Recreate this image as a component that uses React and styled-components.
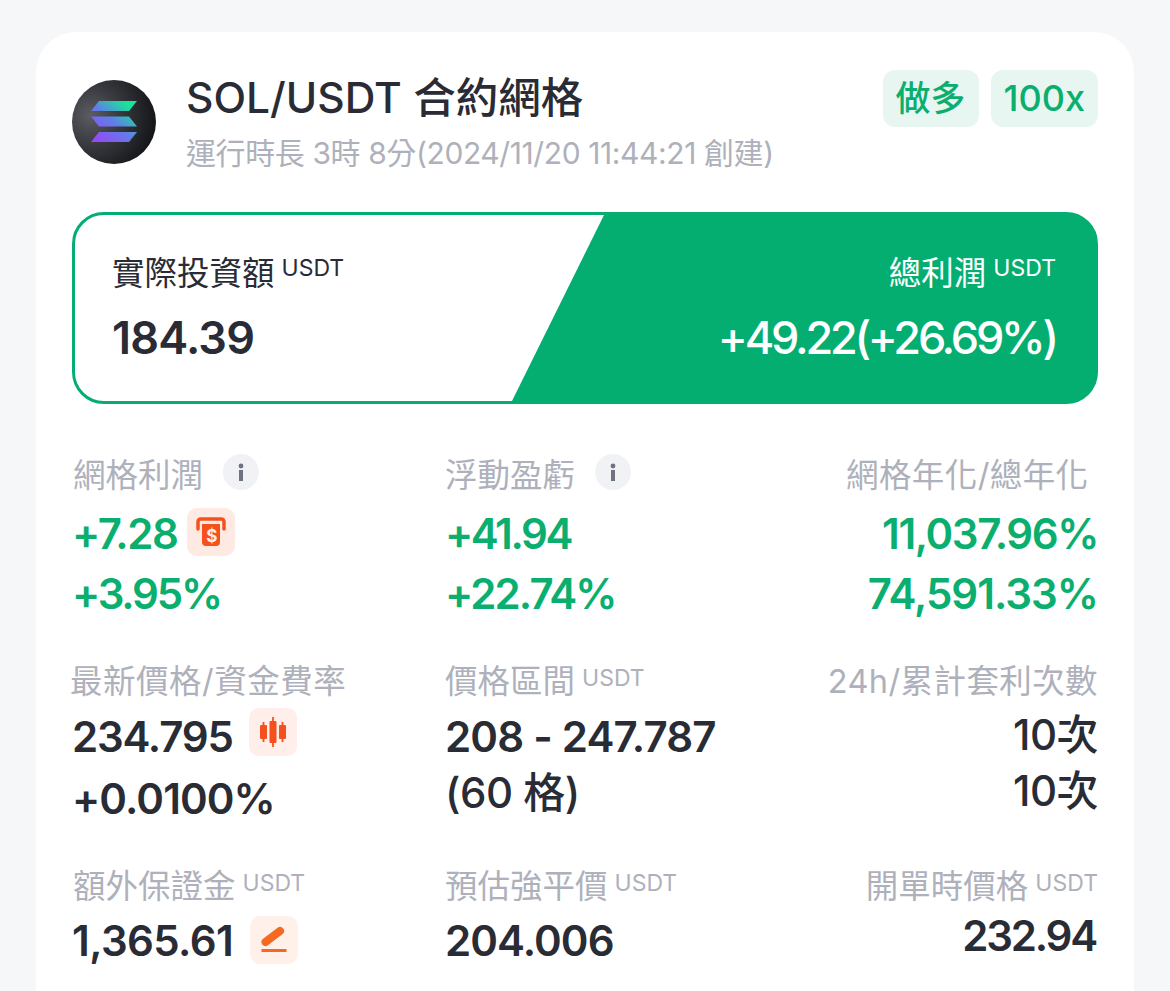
import React from "react";
import { styled, createGlobalStyle } from "styled-components";

const Global = createGlobalStyle`
    html, body {
        margin: 0;
        padding: 0;
        height: 991px;
        overflow: hidden;
        background: #f6f7f9;
        font-family: "Inter", "Noto Sans CJK TC", sans-serif;
    }
`;

const Page = styled.div`
    padding: 32px 36px 0;
    height: 959px;
    overflow: hidden;
`;
const Card = styled.div`
    background: white;
    border-radius: 40px 40px 0 0;
    padding: 38px 36px 0;
    height: 921px;
`;
const Header = styled.div`
    display: flex;
    align-items: flex-start;
    height: 142px;
`;
const Logo = styled.div`
    width: 84px;
    height: 84px;
    margin-top: 10px;
    margin-right: 30px;
    border-radius: 50%;
    background: radial-gradient(circle at 22% 42%, #5b5c62 0%, #37383d 38%, #151619 80%);
    display: flex;
    justify-content: center;
    align-items: center;
`;
const HeaderText = styled.div`
    flex: 1;
`;
const PairTitle = styled.div`
    font-size: 42.5px;
    font-weight: 500;
    line-height: 56px;
    color: #2a2c35;
`;
const SubTitle = styled.div`
    font-size: 30px;
    line-height: 40px;
    margin-top: 7px;
    color: #aeb1bb;
    letter-spacing: -0.4px;
    white-space: nowrap;
`;
const Tags = styled.div`
    display: flex;
    gap: 12px;
`;
const Tag = styled.div`
    height: 57px;
    padding: 0 13px;
    border-radius: 12px;
    background: #e8f6f1;
    color: #0aae6e;
    font-size: ${props => props.$size}px;
    font-weight: 500;
    line-height: 57px;
`;

const Panel = styled.div`
    display: flex;
    height: 192px;
    box-sizing: border-box;
    border: 3px solid #04ae70;
    border-radius: 32px;
    overflow: hidden;
    background: linear-gradient(to right, white 60%, #04ae70 60%);
`;
const PanelLeft = styled.div`
    width: 437px;
    flex: none;
    padding: 37px 0 0 37px;
    box-sizing: border-box;
`;
const PanelRight = styled.div`
    flex: 1;
    background: #04ae70;
    clip-path: polygon(92px 0, 100% 0, 100% 100%, 0 100%);
    padding: 37px 39px 0 0;
    text-align: right;
    color: white;
`;
const PanelLabel = styled.div`
    font-size: 32.5px;
    line-height: 44px;
    color: ${props => props.$light ? 'white' : '#2a2c35'};
`;
const Unit = styled.sup`
    font-size: 23px;
    line-height: 0;
    vertical-align: 9px;
    margin-left: 7px;
    font-weight: 400;
    color: inherit;
`;
const PanelValue = styled.div`
    font-size: 45px;
    font-weight: ${props => props.$light ? 500 : 600};
    line-height: 56px;
    margin-top: 14px;
    letter-spacing: ${props => props.$track || 0}px;
    color: ${props => props.$light ? 'white' : '#2a2c35'};
`;

const Stats = styled.div`
    display: grid;
    grid-template-columns: 373px 1fr auto;
    margin-top: 46px;
`;
const Cell = styled.div`
    height: ${props => props.$h}px;
`;
const Label = styled.div`
    display: flex;
    align-items: center;
    justify-content: ${props => props.$right ? 'flex-end' : 'flex-start'};
    height: 44px;
    margin-bottom: ${props => props.$below}px;
    margin-left: ${props => props.$shift || 0}px;
    font-size: 32.5px;
    letter-spacing: ${props => props.$track || 0}px;
    color: #aeb1bb;
    white-space: nowrap;
`;
const Value = styled.div`
    display: flex;
    align-items: center;
    justify-content: ${props => props.$right ? 'flex-end' : 'flex-start'};
    height: ${props => props.$h || 60}px;
    padding-right: ${props => props.$inset || 0}px;
    font-size: 42px;
    font-weight: ${props => props.$weight || 600};
    letter-spacing: ${props => props.$track || -0.5}px;
    white-space: nowrap;
    color: ${props => props.$green ? '#0aae6e' : '#2a2c35'};
`;
const InfoDot = styled.span`
    display: inline-flex;
    justify-content: center;
    align-items: center;
    width: 36px;
    height: 36px;
    margin-left: 20px;
    border-radius: 50%;
    background: #f1f2f6;
`;
const IconBox = styled.span`
    display: inline-flex;
    justify-content: center;
    align-items: center;
    width: 48px;
    height: 48px;
    margin-left: ${props => props.$gap}px;
    margin-bottom: ${props => props.$lift || 0}px;
    border-radius: 10px;
    background: ${props => props.$bg};
`;

function SolanaLogo() {
    return (
        <svg width="46" height="42" viewBox="0 0 46 42">
            <defs>
                <linearGradient id="sol" gradientUnits="userSpaceOnUse" x1="6" y1="42" x2="40" y2="0">
                    <stop offset="0" stopColor="#9a45fc" />
                    <stop offset="0.5" stopColor="#5f7fe6" />
                    <stop offset="0.9" stopColor="#19e39a" />
                </linearGradient>
            </defs>
            <g fill="url(#sol)">
                <path d="M8 0 H46 L38 10 H0 Z" />
                <path d="M0 15.5 H38 L46 25.5 H8 Z" />
                <path d="M8 31 H46 L38 41 H0 Z" />
            </g>
        </svg>
    );
}

function InfoIcon() {
    return (
        <svg width="8" height="18" viewBox="0 0 8 18">
            <circle cx="4" cy="3" r="2.4" fill="#6f7280" />
            <rect x="2" y="7" width="4" height="11" fill="#6f7280" />
        </svg>
    );
}

function AtmIcon() {
    return (
        <svg width="32" height="30" viewBox="0 0 32 30">
            <path d="M3 12 V5 Q3 2 6 2 H26 Q29 2 29 5 V12" fill="none" stroke="#f4511e" strokeWidth="3.5" strokeLinecap="round" />
            <path d="M7 7 H25 V25 Q25 29 21 29 H11 Q7 29 7 25 Z" fill="#f4511e" />
            <text x="16" y="25" textAnchor="middle" fontSize="17" fontWeight="700" fill="#ffeae3" fontFamily="Inter, sans-serif">$</text>
        </svg>
    );
}

function CandleIcon() {
    return (
        <svg width="26" height="30" viewBox="0 0 26 30" fill="#f4511e">
            <rect x="0" y="8" width="7" height="14" rx="1" />
            <rect x="2.6" y="5" width="1.8" height="20" />
            <rect x="9.5" y="4" width="7" height="22" rx="1" />
            <rect x="12.1" y="0" width="1.8" height="30" />
            <rect x="19" y="8" width="7" height="14" rx="1" />
            <rect x="21.6" y="5" width="1.8" height="20" />
        </svg>
    );
}

function PencilIcon() {
    return (
        <svg width="28" height="28" viewBox="0 0 28 28">
            <path d="M20 5 L5.5 16" stroke="#f56a22" strokeWidth="8" strokeLinecap="round" />
            <rect x="1.5" y="23" width="25" height="3" fill="#f56a22" />
        </svg>
    );
}

export default function App() {
    return (
        <Page>
            <Global />
            <Card>
                <Header>
                    <Logo><SolanaLogo /></Logo>
                    <HeaderText>
                        <PairTitle>SOL/USDT 合約網格</PairTitle>
                        <SubTitle>運行時長 3時 8分(2024/11/20 11:44:21 創建)</SubTitle>
                    </HeaderText>
                    <Tags>
                        <Tag $size={35}>做多</Tag>
                        <Tag $size={36}>100x</Tag>
                    </Tags>
                </Header>
                <Panel>
                    <PanelLeft>
                        <PanelLabel>實際投資額<Unit>USDT</Unit></PanelLabel>
                        <PanelValue $track={-0.8}>184.39</PanelValue>
                    </PanelLeft>
                    <PanelRight>
                        <PanelLabel $light>總利潤<Unit>USDT</Unit></PanelLabel>
                        <PanelValue $light $track={-3.2}>+49.22(+26.69%)</PanelValue>
                    </PanelRight>
                </Panel>
                <Stats>
                    <Cell $h={206}>
                        <Label $below={9} $shift={1}>網格利潤<InfoDot><InfoIcon /></InfoDot></Label>
                        <Value $green $track={-1.4}>+7.28<IconBox $gap={9} $lift={2} $bg="#ffeae3"><AtmIcon /></IconBox></Value>
                        <Value $green $track={-2.2}>+3.95%</Value>
                    </Cell>
                    <Cell $h={206}>
                        <Label $below={9}>浮動盈虧<InfoDot><InfoIcon /></InfoDot></Label>
                        <Value $green $track={-2.4}>+41.94</Value>
                        <Value $green $track={-1.9}>+22.74%</Value>
                    </Cell>
                    <Cell $h={206}>
                        <Label $right $below={9} $track={0.4}>網格年化/總年化&nbsp;</Label>
                        <Value $right $green $track={-1.4}>11,037.96%</Value>
                        <Value $right $green $track={-1}>74,591.33%</Value>
                    </Cell>

                    <Cell $h={205}>
                        <Label $below={6} $shift={-2} $track={0.5}>最新價格/資金費率</Label>
                        <Value $track={-1.2}>234.795<IconBox $gap={16} $lift={8} $bg="#ffeeea"><CandleIcon /></IconBox></Value>
                        <Value $h={64} $track={-0.9}>+0.0100%</Value>
                    </Cell>
                    <Cell $h={205}>
                        <Label $below={6}>價格區間<Unit>USDT</Unit></Label>
                        <Value $track={-0.8}>208 - 247.787</Value>
                        <Value $h={46} $weight={500}>(60 格)</Value>
                    </Cell>
                    <Cell $h={205}>
                        <Label $right $below={1} $track={0.4}>24h/累計套利次數</Label>
                        <Value $right $weight={500}>10次</Value>
                        <Value $right $h={52} $weight={500}>10次</Value>
                    </Cell>

                    <Cell $h={120}>
                        <Label $below={5} $shift={1}>額外保證金<Unit>USDT</Unit></Label>
                        <Value $track={-0.6}>1,365.61<IconBox $gap={17} $bg="#fff0e9"><PencilIcon /></IconBox></Value>
                    </Cell>
                    <Cell $h={120}>
                        <Label $below={5}>預估強平價<Unit>USDT</Unit></Label>
                        <Value $track={-0.9}>204.006</Value>
                    </Cell>
                    <Cell $h={120}>
                        <Label $right $below={0}>開單時價格<Unit>USDT</Unit></Label>
                        <Value $right $inset={2} $track={-2.2}>232.94</Value>
                    </Cell>
                </Stats>
            </Card>
        </Page>
    );
}
